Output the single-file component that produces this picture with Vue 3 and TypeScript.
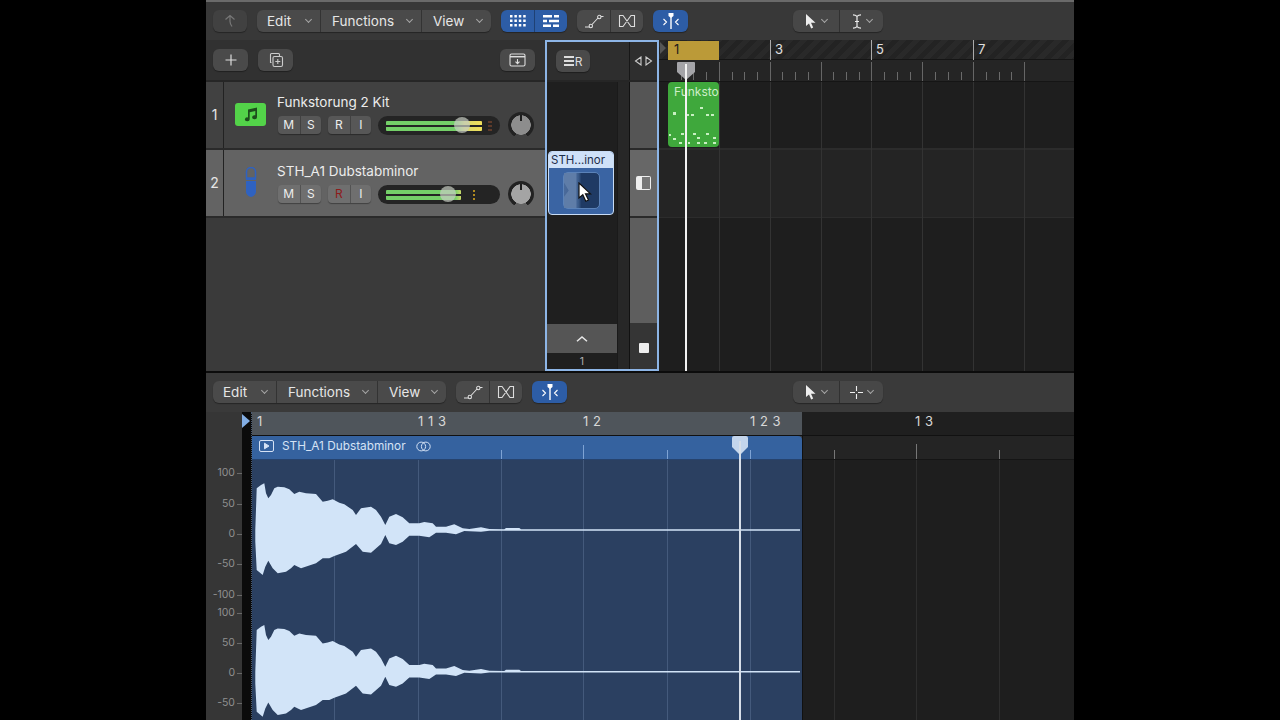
<script setup lang="ts">
interface ITrack {
  num: number,
  name: string,
  kind: 'kit' | 'mic',
  selected: boolean,
  rec: boolean,
  level: number,
  thumb: number
}

const tracks: ITrack[] = [
  { num: 1, name: 'Funkstorung 2 Kit', kind: 'kit', selected: false, rec: false, level: 96, thumb: 84 },
  { num: 2, name: 'STH_A1 Dubstabminor', kind: 'mic', selected: true, rec: true, level: 75, thumb: 70 }
]

// bars of the upper ruler, 50.9px apart
const barLabels = [
  { label: '3', x: 111 },
  { label: '5', x: 212 },
  { label: '7', x: 314 }
]
const barLines = [60, 111, 162, 212, 263, 314, 365]
const beatTicks: number[] = []
for (let i = 0; i < 28; i++) {
  if (i % 4 !== 0) beatTicks.push(9 + i * 12.72)
}

const notes = [
  [5, 30, 3, 3], [18, 32, 3, 1.5], [23, 32, 3, 1.5], [32, 25, 3, 1.5], [38, 32, 3, 1.5], [43, 32, 3, 1.5],
  [1, 52, 2, 1.5], [5, 56, 3, 1.5], [13, 51, 3, 2], [11, 60, 3, 2], [20, 60, 2, 1.5], [25, 51, 3, 2],
  [29, 55, 3, 2], [29, 60, 3, 2], [36, 60, 3, 2], [38, 51, 3, 2], [45, 55, 3, 2], [45, 60, 3, 2]
]

const editorLabels = [
  { label: '1', x: 5 },
  { label: '1 1 3', x: 166 },
  { label: '1 2', x: 331 },
  { label: '1 2 3', x: 498 },
  { label: '1 3', x: 663 }
]
const regionLines = [82, 166, 249, 331, 415, 498]
const emptyLines = [581, 663, 746]
const regionMarks = [
  { x: 249, h: 9 }, { x: 331, h: 14 }, { x: 415, h: 9 }, { x: 498, h: 9 }
]
const emptyMarks = [{ x: 581, h: 9 }, { x: 663, h: 15 }, { x: 746, h: 9 }]

const leftScale = [
  { label: '100', y: 60 }, { label: '50', y: 91 }, { label: '0', y: 121 }, { label: '-50', y: 151 },
  { label: '-100', y: 182 }, { label: '100', y: 200 }, { label: '50', y: 230 }, { label: '0', y: 260 }, { label: '-50', y: 290 }
]

// envelope, read off the recording: x, upper edge, lower edge in px from the channel centre
const upper = [
  [148, 0], [152, 125], [165, 135], [175, 140], [180, 110], [187, 95], [195, 105], [205, 125], [215, 130], [235, 128],
  [250, 122], [265, 108], [280, 115], [300, 110], [330, 108], [350, 85], [365, 88], [380, 92], [400, 82], [415, 77],
  [440, 60], [450, 45], [465, 65], [495, 70], [510, 60], [525, 40], [538, 15], [550, 40], [570, 48], [590, 38],
  [610, 20], [640, 20], [655, 24], [680, 20], [690, 10], [720, 10], [745, 17], [770, 5], [790, 3], [825, 8], [850, 3],
  [895, 2.5], [900, 6], [940, 6], [945, 2.5], [1782, 2.5]
]
const lower = [
  [148, 35], [152, 120], [170, 135], [178, 110], [187, 92], [200, 115], [215, 130], [240, 125], [255, 115], [265, 105],
  [285, 115], [330, 100], [350, 85], [370, 85], [385, 78], [420, 65], [450, 42], [470, 65], [495, 68], [525, 42],
  [538, 15], [550, 40], [570, 45], [590, 35], [610, 17], [640, 17], [670, 22], [680, 15], [690, 8], [720, 8], [750, 13],
  [775, 3], [825, 5], [850, 2.5], [1782, 2.5]
]

const channelPath = (centre: number) => {
  const px = (z: number) => (z / 3 - 46).toFixed(1)
  const dy = (v: number) => v / 3
  const top = upper.map(([x, v]) => `${px(x)},${(centre - dy(v)).toFixed(1)}`)
  const bottom = [...lower].reverse().map(([x, v]) => `${px(x)},${(centre + dy(v)).toFixed(1)}`)
  return `M${top.join('L')}L${bottom.join('L')}Z`
}
const waveform = `${channelPath(70)}${channelPath(211.7)}`
</script>

<template>
  <div class="stage">
    <div class="window">
      <section class="arrange">
        <div class="toolbar toolbar--top">
          <button class="btn btn--back">
            <svg width="16" height="16" viewBox="0 0 16 16" fill="none" stroke="#777" stroke-width="1.2">
              <path d="M3.500 6.500 8 2.500l4.500 4M8 2.500v6c0 2 1 3.500 2 5"/>
            </svg>
          </button>
          <div class="group">
            <div class="menu menu--edit">Edit<i class="chev"></i></div>
            <div class="menu menu--functions">Functions<i class="chev"></i></div>
            <div class="menu menu--view">View<i class="chev"></i></div>
          </div>
          <div class="group group--blue">
            <div class="cell cell--33">
              <svg width="16" height="12" viewBox="0 0 16 12" fill="#fff">
                <path d="M0 0h2.500v2.500H0zM4.400 0h2.500v2.500H4.400zM8.800 0h2.500v2.500H8.800zM13.200 0h2.500v2.500h-2.500zM0 4.500h2.500V7H0zM4.400 4.500h2.500V7H4.400zM8.800 4.500h2.500V7H8.800zM13.200 4.500h2.500V7h-2.500zM0 9h2.500v2.500H0zM4.400 9h2.500v2.500H4.400zM8.800 9h2.500v2.500H8.800zM13.200 9h2.500v2.500h-2.500z"/>
              </svg>
            </div>
            <div class="cell cell--33">
              <svg width="16" height="12" viewBox="0 0 16 12" fill="#fff">
                <path d="M0 0h9v2.500H0zM11 0h5v2.500h-5zM0 4.700h4v2.500H0zM6 4.700h10v2.500H6zM0 9.400h8v2.500H0zM10 9.400h6v2.500h-6z"/>
              </svg>
            </div>
          </div>
          <div class="group">
            <div class="cell cell--33">
              <svg width="20" height="16" viewBox="0 0 20 16" fill="none" stroke="#ddd" stroke-width="1.1">
                <path d="M1 14h4.500M8 11.500l6-6.500M17 3.500h2.500"/><circle cx="6.800" cy="13" r="1.700"/><circle cx="15.300" cy="4" r="1.700"/>
              </svg>
            </div>
            <div class="cell cell--33">
              <svg width="18" height="14" viewBox="0 0 18 14" fill="none" stroke="#ddd" stroke-width="1.100">
                <path d="M1.500 1.500h3.500l8 11h3.500v-11h-3.500l-8 11H1.500z"/>
              </svg>
            </div>
          </div>
          <button class="btn btn--blue">
            <svg width="20" height="18" viewBox="0 0 20 18" fill="none" stroke="#fff" stroke-width="1.100">
              <path d="M10 4v13" stroke-width="1.400"/><path d="M7.500 1h5v3l-2.500 2-2.500-2z" fill="#fff" stroke="none"/>
              <path d="m2.500 7 3 3-3 3M17.500 7l-3 3 3 3"/>
            </svg>
          </button>
          <div class="spring"></div>
          <div class="group group--tools">
            <div class="cell cell--46">
              <svg class="pointer" width="12" height="15" viewBox="0 0 12 15" fill="#eee"><path d="M1 0v12l3-2.500L6.200 14.500l2-1L6 8.800h4.500z"/></svg>
              <i class="chev"></i>
            </div>
            <div class="cell cell--44">
              <svg class="pointer" width="10" height="15" viewBox="0 0 10 15" fill="none" stroke="#eee" stroke-width="1.200">
                <path d="M1 .8c2 0 3 .5 4 1.500 1-1 2-1.500 4-1.500M5 2.300v10.400M1 14.200c2 0 3-.5 4-1.500 1 1 2 1.500 4 1.500M3 7.500h4"/>
              </svg>
              <i class="chev"></i>
            </div>
          </div>
        </div>

        <div class="arrange__body">
          <div class="tracklist">
            <div class="tracklist__head">
              <button class="btn btn--square">
                <svg width="14" height="14" viewBox="0 0 14 14" stroke="#ddd" stroke-width="1.200"><path d="M7 1.500v11M1.500 7h11"/></svg>
              </button>
              <button class="btn btn--square btn--dup">
                <svg width="16" height="16" viewBox="0 0 16 16" fill="none" stroke="#ccc" stroke-width="1.100">
                  <path d="M3.500 10.500h-1v-8a1 1 0 0 1 1-1h7a1 1 0 0 1 1 1v1.500"/><rect x="5" y="4.500" width="9.500" height="10" rx="1.500"/>
                  <path d="M9.800 7v5M7.300 9.500h5"/>
                </svg>
              </button>
              <div class="spring"></div>
              <button class="btn btn--square">
                <svg width="17" height="14" viewBox="0 0 17 14" fill="none" stroke="#ddd" stroke-width="1.100">
                  <rect x="1" y="1" width="15" height="12" rx="1.500"/><path d="M1 3.700h15" stroke-width="1.500"/><path d="M8.500 6v4.500M6.500 8.600l2 2 2-2"/>
                </svg>
              </button>
            </div>

            <div v-for="track in tracks" :key="track.num" class="track" :class="{ 'track--selected': track.selected }">
              <div class="track__num">{{ track.num }}</div>
              <div class="track__icon">
                <span v-if="track.kind === 'kit'" class="kit-icon">
                  <svg width="16" height="16" viewBox="0 0 16 16" fill="#1d4d1c"><path d="M5 3.500 14 1.500v9.700a2.400 2 0 1 1-1.700-1.900V5L6.700 6.300v7a2.400 2 0 1 1-1.700-1.900z"/></svg>
                </span>
                <svg v-else width="12" height="31" viewBox="0 0 12 31">
                  <path d="M1.500 5a4.500 4.500 0 0 1 9 0v6h-9z" fill="none" stroke="#2f62c0" stroke-width="1.500"/>
                  <path d="M1 11h10v2H1zM1 14h10v11c0 2-3 5-5 5s-5-3-5-5z" fill="#2f62c0"/>
                </svg>
              </div>
              <div class="track__main">
                <div class="track__name">{{ track.name }}</div>
                <div class="track__controls">
                  <div class="mini"><span>M</span><span>S</span></div>
                  <div class="mini"><span :class="{ 'mini__rec': track.rec }">R</span><span>I</span></div>
                  <div class="fader">
                    <div class="fader__level" :style="{ width: track.level + 'px' }"></div>
                    <div class="fader__thumb" :style="{ left: track.thumb - 8 + 'px' }"></div>
                    <div class="fader__peak" :class="{ 'fader__peak--far': !track.rec }"></div>
                  </div>
                  <div class="knob"><i></i></div>
                </div>
              </div>
            </div>
          </div>

          <div class="inspector">
            <div class="inspector__head">
              <div class="inspector__head-left">
                <button class="btn btn--r">
                  <svg width="11" height="13" viewBox="0 0 11 13" fill="#ddd"><path d="M0 1h10v2H0zM0 5h10v2H0zM0 9h10v2H0z"/></svg>
                  <span>R</span>
                </button>
              </div>
              <div class="inspector__head-right">
                <svg width="19" height="10" viewBox="0 0 19 10" fill="none" stroke="#ccc" stroke-width="1.100"><path d="M7 1 1.500 5 7 9zM12 1l5.500 4L12 9z"/></svg>
              </div>
            </div>
            <div class="inspector__body">
              <div class="strips">
                <div class="strip-area">
                  <div class="strip-slot"></div>
                  <div class="clip">
                    <div class="clip__title">STH...inor</div>
                    <div class="clip__body">
                      <div class="clip__thumb">
                        <div class="clip__thumb-lit"></div>
                        <svg class="clip__cursor" width="15" height="21" viewBox="0 0 15 21">
                          <path d="M2 1v15l3.800-3.300 3 6.500 2.700-1.200-3-6.200h5z" fill="#fff" stroke="#111" stroke-width="1.200"/>
                        </svg>
                      </div>
                    </div>
                  </div>
                  <div class="spring"></div>
                  <div class="collapse">
                    <svg width="12" height="6" viewBox="0 0 12 6" fill="none" stroke="#e8e8e8" stroke-width="1.500"><path d="M1 5.300 6 1l5 4.300"/></svg>
                  </div>
                  <div class="strip-num">1</div>
                </div>
                <div class="strip-edge"></div>
              </div>
              <div class="side">
                <div class="side__row"></div>
                <div class="side__row side__row--lit">
                  <span class="side__panel"><i></i></span>
                </div>
                <div class="side__row side__row--fill"></div>
                <div class="side__stop"><i></i></div>
              </div>
            </div>
          </div>

          <div class="timeline">
            <div class="ruler">
              <div class="ruler__cycle"><span>1</span></div>
              <i class="ruler__flag"></i>
              <div v-for="bar in barLabels" :key="bar.label" class="ruler__bar" :style="{ left: bar.x + 'px' }">{{ bar.label }}</div>
            </div>
            <div class="beats">
              <i v-for="x in beatTicks" :key="x" class="beats__tick" :style="{ left: x + 'px' }"></i>
              <i v-for="x in barLines" :key="x" class="beats__bar" :style="{ left: x + 'px' }"></i>
            </div>
            <div class="lanes">
              <div class="lane"></div>
              <div class="lane lane--selected"></div>
              <i v-for="x in barLines" :key="x" class="lanes__line" :style="{ left: x + 'px' }"></i>
              <div class="region-midi">
                <div class="region-midi__name">Funksto</div>
                <i v-for="(n, i) in notes" :key="i" class="note"
                   :style="{ left: n[0] + 'px', top: n[1] + 'px', width: n[2] + 'px', height: n[3] + 'px' }"></i>
              </div>
            </div>
            <div class="playhead">
              <svg width="20" height="18" viewBox="0 0 20 18"><path d="M2 0h16a1 1 0 0 1 1 1v9l-9 8-9-8V1a1 1 0 0 1 1-1z" fill="#a4a4a8"/></svg>
              <i></i>
            </div>
          </div>
        </div>
      </section>

      <section class="editor">
        <div class="toolbar toolbar--editor">
          <div class="group">
            <div class="menu menu--e-edit">Edit<i class="chev"></i></div>
            <div class="menu menu--e-functions">Functions<i class="chev"></i></div>
            <div class="menu menu--e-view">View<i class="chev"></i></div>
          </div>
          <div class="group">
            <div class="cell cell--33">
              <svg width="20" height="16" viewBox="0 0 20 16" fill="none" stroke="#ddd" stroke-width="1.100">
                <path d="M1 14h4.500M8 11.500l6-6.500M17 3.500h2.500"/><circle cx="6.800" cy="13" r="1.700"/><circle cx="15.300" cy="4" r="1.700"/>
              </svg>
            </div>
            <div class="cell cell--33">
              <svg width="18" height="14" viewBox="0 0 18 14" fill="none" stroke="#ddd" stroke-width="1.100">
                <path d="M1.500 1.500h3.500l8 11h3.500v-11h-3.500l-8 11H1.500z"/>
              </svg>
            </div>
          </div>
          <button class="btn btn--blue">
            <svg width="20" height="18" viewBox="0 0 20 18" fill="none" stroke="#fff" stroke-width="1.100">
              <path d="M10 4v13" stroke-width="1.400"/><path d="M7.500 1h5v3l-2.500 2-2.500-2z" fill="#fff" stroke="none"/>
              <path d="m2.500 7 3 3-3 3M17.500 7l-3 3 3 3"/>
            </svg>
          </button>
          <div class="spring"></div>
          <div class="group group--tools">
            <div class="cell cell--46">
              <svg class="pointer" width="12" height="15" viewBox="0 0 12 15" fill="#eee"><path d="M1 0v12l3-2.500L6.200 14.500l2-1L6 8.800h4.500z"/></svg>
              <i class="chev"></i>
            </div>
            <div class="cell cell--44">
              <svg class="pointer" width="13" height="13" viewBox="0 0 13 13" stroke="#eee" stroke-width="1.100"><path d="M6.500 0v5M6.500 8v5M0 6.500h5M8 6.500h5"/></svg>
              <i class="chev"></i>
            </div>
          </div>
        </div>

        <div class="editor__body">
          <div class="scale">
            <div v-for="(s, i) in leftScale" :key="i" class="scale__item" :style="{ top: s.y - 6 + 'px' }">
              {{ s.label }}<i></i>
            </div>
          </div>
          <div class="anchor-strip">
            <i class="anchor-strip__flag"></i>
          </div>
          <div class="editor__canvas">
            <div class="editor-ruler">
              <div class="editor-ruler__active"></div>
              <span v-for="l in editorLabels" :key="l.label" class="editor-ruler__label" :style="{ left: l.x + 'px' }">{{ l.label }}</span>
            </div>
            <div class="audio">
              <div class="audio__region">
                <div class="audio__head">
                  <svg width="15" height="12" viewBox="0 0 15 12" fill="none" stroke="#d5e2f5" stroke-width="1">
                    <rect x=".5" y=".5" width="14" height="11" rx="1.500"/><path d="m5.500 3.200 4.500 2.800-4.500 2.800z" fill="#d5e2f5"/>
                  </svg>
                  <span class="audio__name">STH_A1 Dubstabminor</span>
                  <svg width="15" height="11" viewBox="0 0 15 11" fill="none" stroke="#d5e2f5" stroke-width="1">
                    <circle cx="5.200" cy="5.500" r="4.400"/><circle cx="9.800" cy="5.500" r="4.400"/>
                  </svg>
                  <i v-for="m in regionMarks" :key="m.x" class="audio__mark" :style="{ left: m.x + 'px', height: m.h + 'px' }"></i>
                </div>
                <div class="audio__wave">
                  <i v-for="x in regionLines" :key="x" class="audio__line" :style="{ left: x + 'px' }"></i>
                  <svg class="audio__svg" width="550" height="260" viewBox="0 0 550 260">
                    <path :d="waveform" fill="#d2e4f8"/>
                  </svg>
                </div>
              </div>
              <div class="audio__empty">
                <div class="audio__empty-head">
                  <i v-for="m in emptyMarks" :key="m.x" class="empty-mark" :style="{ left: m.x - 550 + 'px', height: m.h + 'px' }"></i>
                </div>
                <div class="audio__empty-body">
                  <i v-for="x in emptyLines" :key="x" class="empty-line" :style="{ left: x - 550 + 'px' }"></i>
                </div>
              </div>
            </div>
            <div class="editor-playhead">
              <svg width="18" height="20" viewBox="0 0 18 20"><path d="M3 0h12a2 2 0 0 1 2 2v9l-8 8-8-8V2a2 2 0 0 1 2-2z" fill="#c3d5ec"/></svg>
              <i></i>
            </div>
          </div>
        </div>
      </section>
    </div>
  </div>
</template>

<style scoped>
.stage, .stage * {
  box-sizing: border-box;
}
.stage {
  width: 1280px;
  height: 720px;
  background: #000;
  display: flex;
  justify-content: center;
  overflow: hidden;
  font-family: Inter, "Noto Sans", sans-serif;
  color: #e4e4e4;
}
.window {
  width: 868px;
  height: 720px;
  display: flex;
  flex-direction: column;
  background: #3a3a3a;
  overflow: hidden;
}
.spring {
  flex: 1;
}
i {
  display: block;
}
button {
  padding: 0;
  border: none;
  font: inherit;
  color: inherit;
}

/* toolbars */
.toolbar {
  display: flex;
  align-items: center;
  gap: 10px;
  flex: none;
  height: 40px;
  padding-left: 7px;
  padding-right: 191px;
  background: #393939;
}
.toolbar--top {
  border-top: 2px solid #6a6a6a;
  background: #383838;
}
.toolbar--editor {
  height: 39px;
  padding-bottom: 1px;
  background: #3a3a3a;
}
.group {
  display: flex;
  height: 22px;
  background: #4a4a4a;
  border-radius: 6px;
  box-shadow: 0 1px 1px rgba(0, 0, 0, .35);
  overflow: hidden;
}
.group--blue {
  background: #2d5da6;
}
.group--tools {
  background: #474747;
}
.cell {
  display: flex;
  align-items: center;
  justify-content: center;
  gap: 5px;
  border-left: 1px solid rgba(0, 0, 0, .3);
}
.cell:first-child {
  border-left: none;
}
.cell--33 {
  width: 33px;
}
.cell--46 {
  width: 46px;
}
.cell--44 {
  width: 44px;
}
.menu {
  display: flex;
  align-items: center;
  justify-content: space-between;
  padding: 0 9px 0 11px;
  font-size: 13.500px;
  color: #e6e6e6;
  border-left: 1px solid rgba(0, 0, 0, .3);
}
.menu:first-child {
  border-left: none;
  padding-left: 10px;
}
.menu--edit { width: 63px; }
.menu--functions { width: 101px; }
.menu--view { width: 70px; }
.menu--e-edit { width: 63px; }
.menu--e-functions { width: 101px; }
.menu--e-view { width: 69px; }
.chev {
  width: 5px;
  height: 5px;
  margin-top: -3px;
  border-right: 1.2px solid #a5a5a5;
  border-bottom: 1.2px solid #a5a5a5;
  transform: rotate(45deg);
}
.btn {
  display: flex;
  align-items: center;
  justify-content: center;
  height: 22px;
  border-radius: 6px;
  background: #4a4a4a;
  box-shadow: 0 1px 1px rgba(0, 0, 0, .35);
  flex: none;
}
.btn--back {
  width: 34px;
  background: #414141;
}
.btn--blue {
  width: 35px;
  background: #2d5da6;
}
.btn--square {
  width: 35px;
}
.btn--dup {
  margin-left: 10px;
}
.btn--r {
  width: 34px;
  gap: 0;
  font-size: 12px;
  color: #ddd;
}

/* arrange area */
.arrange {
  height: 373px;
  flex: none;
  display: flex;
  flex-direction: column;
}
.arrange__body {
  flex: 1;
  display: flex;
  min-height: 0;
  border-bottom: 2px solid #0c0c0c;
}
.tracklist {
  width: 339px;
  flex: none;
  background: #3a3a3a;
}
.tracklist__head {
  display: flex;
  align-items: center;
  height: 42px;
  padding: 0 10px 0 7px;
  background: #313131;
  border-bottom: 2px solid #262626;
}
.track {
  display: flex;
  height: 68px;
  background: #414141;
  border-bottom: 2px solid #2a2a2a;
}
.track--selected {
  background: #636363;
}
.track__num {
  width: 18px;
  flex: none;
  display: flex;
  align-items: center;
  justify-content: center;
  border-right: 1px solid #222;
  font-size: 14px;
  color: #e6e6e6;
  padding-bottom: 2px;
}
.track__icon {
  width: 53px;
  flex: none;
  display: flex;
  align-items: center;
  justify-content: center;
  padding-bottom: 2px;
}
.kit-icon {
  display: flex;
  align-items: center;
  justify-content: center;
  width: 31px;
  height: 23px;
  border-radius: 3px;
  background: #53d349;
}
.track__main {
  display: flex;
  flex-direction: column;
  padding-top: 11px;
}
.track--selected .track__main {
  padding-top: 12px;
}
.track__name {
  font-size: 13.500px;
  line-height: 18px;
  color: #ececec;
}
.track__controls {
  display: flex;
  align-items: center;
  height: 18px;
  margin-top: 5px;
  margin-left: 1px;
}
.mini {
  display: flex;
  height: 18px;
  border-radius: 4px;
  background: #575757;
  box-shadow: 0 1px 1px rgba(0, 0, 0, .35);
  margin-right: 7px;
  overflow: hidden;
}
.track--selected .mini {
  background: #6f6f6f;
}
.mini span {
  width: 21.500px;
  text-align: center;
  font-size: 12px;
  line-height: 18px;
  color: #eee;
  border-left: 1px solid rgba(0, 0, 0, .25);
}
.mini span:first-child {
  border-left: none;
}
.mini .mini__rec {
  color: #8e1b1b;
}
.fader {
  position: relative;
  width: 122px;
  height: 19px;
  flex: none;
  border-radius: 10px;
  background: #242424;
}
.fader__level {
  position: absolute;
  left: 8px;
  top: 5px;
  height: 10px;
  border-radius: 1px;
  background:
    linear-gradient(to bottom, transparent 40%, #242424 40%, #242424 60%, transparent 60%),
    linear-gradient(to right, #74cf68 0, #74cf68 74%, #d9d96a 82%, #f1e05a 100%);
}
.track--selected .fader__level {
  background:
    linear-gradient(to bottom, transparent 40%, #242424 40%, #242424 60%, transparent 60%),
    linear-gradient(to right, #74cf68 0, #74cf68 92%, #c9d96a 100%);
}
.fader__thumb {
  position: absolute;
  top: 1.500px;
  width: 16px;
  height: 16px;
  border-radius: 50%;
  background: rgba(200, 205, 195, .7);
}
.fader__peak {
  position: absolute;
  left: 95px;
  top: 5px;
  width: 2px;
  height: 10px;
  background: repeating-linear-gradient(to bottom, #b08a20 0 2px, transparent 2px 4px);
}
.fader__peak--far {
  left: 110px;
  width: 4px;
  background: repeating-linear-gradient(to bottom, #5d3a2a 0 2px, transparent 2px 4px);
}
.knob {
  position: relative;
  width: 26px;
  height: 26px;
  flex: none;
  margin: -4px 0 -4px 8px;
  border-radius: 50%;
  background:
    radial-gradient(circle, #8d8d8d 0 9.500px, transparent 10px),
    conic-gradient(from 150deg, transparent 0 60deg, #222 60deg 360deg);
}
.track--selected .knob {
  background:
    radial-gradient(circle, #a4a4a4 0 9.500px, transparent 10px),
    conic-gradient(from 150deg, transparent 0 60deg, #222 60deg 360deg);
}
.knob i {
  position: absolute;
  left: 12px;
  top: 3px;
  width: 2px;
  height: 6px;
  background: #1d1d1d;
}

/* inspector column */
.inspector {
  width: 114px;
  flex: none;
  display: flex;
  flex-direction: column;
  border: 2px solid #8db5e6;
  background: #1f1f1f;
}
.inspector__head {
  display: flex;
  height: 40px;
  flex: none;
  background: #2e2e2e;
  border-bottom: 2px solid #262626;
}
.inspector__head-left {
  width: 83px;
  padding-left: 9px;
  display: flex;
  align-items: center;
  border-right: 1px solid #171717;
}
.inspector__head-right {
  flex: 1;
  display: flex;
  align-items: center;
  justify-content: center;
}
.inspector__body {
  flex: 1;
  display: flex;
  min-height: 0;
}
.strips {
  display: flex;
  width: 83px;
  flex: none;
  border-right: 1px solid #111;
}
.strip-area {
  width: 70px;
  flex: none;
  display: flex;
  flex-direction: column;
}
.strip-slot {
  height: 69px;
  flex: none;
}
.clip {
  width: 66px;
  height: 64px;
  margin-left: 1px;
  border-radius: 4px;
  border: 1px solid #c8dcf5;
  background: #3a64a3;
  overflow: hidden;
  flex: none;
}
.clip__title {
  height: 16px;
  background: #cfe1f8;
  color: #1d2d48;
  font-size: 11.500px;
  line-height: 16px;
  padding-left: 2px;
  white-space: nowrap;
}
.clip__body {
  display: flex;
  justify-content: center;
  padding-top: 4px;
}
.clip__thumb {
  position: relative;
  width: 37px;
  height: 37px;
  border-radius: 5px;
  border: 1px solid #5b82b8;
  background: linear-gradient(to right, #4a6a9a 0, #3f608f 40%, #1f3a64 50%, #1f3a64 100%);
}
.clip__thumb-lit {
  width: 13px;
  height: 35px;
  background: #5f7da8;
  clip-path: polygon(0 0, 100% 0, 100% 100%, 0 100%, 0 70%, 40% 50%, 0 25%);
}
.clip__cursor {
  position: absolute;
  left: 13px;
  top: 9px;
}
.collapse {
  height: 29px;
  flex: none;
  background: #555;
  display: flex;
  align-items: center;
  justify-content: center;
}
.strip-num {
  height: 16px;
  flex: none;
  padding-top: 1px;
  text-align: center;
  font-size: 10.500px;
  line-height: 16px;
  color: #b0b0b0;
}
.strip-edge {
  flex: 1;
  background: #272727;
  border-left: 1px solid #1a1a1a;
}
.side {
  flex: 1;
  display: flex;
  flex-direction: column;
  background: #353535;
}
.side__row {
  height: 68px;
  flex: none;
  background: #555;
  border-bottom: 2px solid #2a2a2a;
}
.side__row--lit {
  background: #676767;
  display: flex;
  align-items: center;
  justify-content: center;
}
.side__panel {
  display: block;
  width: 15px;
  height: 14px;
  border-radius: 2px;
  background: #eee;
  overflow: hidden;
}
.side__panel i {
  width: 8px;
  height: 12px;
  margin: 1px 1px 1px 6px;
  background: #777;
}
.side__row--fill {
  flex: 1;
  height: auto;
  background: #5e5e5e;
  border-bottom: none;
}
.side__stop {
  height: 46px;
  flex: none;
  padding-top: 20px;
}
.side__stop i {
  width: 10px;
  height: 10px;
  margin-left: 9px;
  border-radius: 1px;
  background: #eee;
}

/* timeline */
.timeline {
  position: relative;
  flex: 1;
  min-width: 0;
  background: #1e1e1e;
}
.ruler {
  position: relative;
  height: 20px;
  background: repeating-linear-gradient(135deg, #292929 0 5px, #232323 5px 10px);
  border-bottom: 1px solid #151515;
}
.ruler__cycle {
  position: absolute;
  left: 9px;
  top: 1px;
  width: 51px;
  height: 19px;
  background: #bb9a38;
}
.ruler__cycle span {
  position: absolute;
  left: 6px;
  top: 0;
  font-size: 13px;
  line-height: 17px;
  color: #1b1b1b;
}
.ruler__flag {
  position: absolute;
  left: 1px;
  top: 2px;
  border-left: 6px solid #555;
  border-top: 6px solid transparent;
  border-bottom: 6px solid transparent;
}
.ruler__bar {
  position: absolute;
  top: 0;
  height: 20px;
  padding-left: 4px;
  border-left: 1px solid #aaa;
  font-size: 13px;
  line-height: 18px;
  color: #e0e0e0;
}
.beats {
  position: relative;
  height: 22px;
  background: #252525;
  border-bottom: 1px solid #151515;
}
.beats__tick {
  position: absolute;
  top: 12px;
  width: 1px;
  height: 8px;
  background: #6a6a6a;
}
.beats__bar {
  position: absolute;
  top: 2px;
  width: 1px;
  height: 19px;
  background: #666;
}
.lanes {
  position: relative;
  height: 289px;
}
.lane {
  height: 68px;
  background: #1e1e1e;
  border-bottom: 2px solid #2c2c2c;
}
.lane--selected {
  background: #242424;
  border-bottom: 1px solid #2c2c2c;
}
.lanes__line {
  position: absolute;
  top: 0;
  bottom: 0;
  width: 1px;
  background: #333;
}
.region-midi {
  position: absolute;
  left: 9px;
  top: 0;
  width: 51px;
  height: 65px;
  border-radius: 4px;
  background: #3fa83c;
  overflow: hidden;
}
.region-midi__name {
  padding: 3px 0 0 6px;
  font-size: 12px;
  line-height: 14px;
  color: #cdeec8;
  white-space: nowrap;
}
.note {
  position: absolute;
  background: #c8f0c2;
}
.playhead {
  position: absolute;
  left: 17px;
  top: 22px;
  width: 20px;
  bottom: 0;
}
.playhead svg {
  display: block;
}
.playhead i {
  position: absolute;
  left: 9px;
  top: 2px;
  bottom: 0;
  width: 1.500px;
  background: #f2f2f2;
}

/* audio editor */
.editor {
  flex: 1;
  min-height: 0;
  display: flex;
  flex-direction: column;
}
.editor__body {
  flex: 1;
  display: flex;
  min-height: 0;
}
.scale {
  position: relative;
  width: 36px;
  flex: none;
  background: #363636;
}
.scale__item {
  position: absolute;
  right: 0;
  display: flex;
  align-items: center;
  gap: 2px;
  font-size: 10.500px;
  line-height: 14px;
  color: #8f8f8f;
}
.scale__item i {
  width: 5px;
  height: 1px;
  background: #6a6a6a;
}
.anchor-strip {
  position: relative;
  width: 10px;
  flex: none;
  background: #0b0b0b;
  border-right: 1px dotted #4a5a70;
}
.anchor-strip__flag {
  position: absolute;
  left: 0;
  top: 2px;
  width: 8px;
  height: 14px;
  background: #83aee4;
  clip-path: polygon(0 0, 100% 50%, 0 100%);
}
.editor__canvas {
  position: relative;
  flex: 1;
  min-width: 0;
}
.editor-ruler {
  position: relative;
  height: 24px;
  background: #1f1f1f;
  border-bottom: 1px solid #111;
}
.editor-ruler__active {
  width: 550px;
  height: 23px;
  background: #4f555b;
}
.editor-ruler__label {
  position: absolute;
  top: 1px;
  font-size: 13px;
  line-height: 17px;
  letter-spacing: .5px;
  color: #d8d8d8;
  white-space: nowrap;
}
.audio {
  display: flex;
  height: 284px;
}
.audio__region {
  width: 550px;
  flex: none;
  display: flex;
  flex-direction: column;
}
.audio__head {
  position: relative;
  height: 24px;
  flex: none;
  display: flex;
  align-items: center;
  gap: 8px;
  padding-left: 7px;
  padding-bottom: 3px;
  background: #35629f;
  border-top-right-radius: 4px;
  border-bottom: 1px solid #26436e;
}
.audio__name {
  font-size: 11.800px;
  color: #d5e2f5;
  margin-right: 2px;
}
.audio__mark {
  position: absolute;
  bottom: 0;
  width: 1px;
  background: #7ea3d4;
}
.audio__wave {
  position: relative;
  flex: 1;
  background: #2b4061;
}
.audio__line {
  position: absolute;
  top: 0;
  bottom: 0;
  width: 1px;
  background: #445a7c;
}
.audio__svg {
  position: absolute;
  left: 0;
  top: 0;
}
.audio__empty {
  flex: 1;
  display: flex;
  flex-direction: column;
  border-left: 1px solid #111;
}
.audio__empty-head {
  position: relative;
  height: 24px;
  flex: none;
  background: #242424;
  border-bottom: 1px solid #151515;
}
.empty-mark {
  position: absolute;
  bottom: 0;
  width: 1px;
  background: #777;
}
.audio__empty-body {
  position: relative;
  flex: 1;
  background: #1e1e1e;
}
.empty-line {
  position: absolute;
  top: 0;
  bottom: 0;
  width: 1px;
  background: #2e2e2e;
}
.editor-playhead {
  position: absolute;
  left: 479px;
  top: 24px;
  bottom: 0;
  width: 18px;
}
.editor-playhead svg {
  display: block;
}
.editor-playhead i {
  position: absolute;
  left: 8px;
  top: 5px;
  bottom: 0;
  width: 2px;
  background: #d6dee8;
}
</style>

<style>
html, body {
  background: #000;
}
</style>
